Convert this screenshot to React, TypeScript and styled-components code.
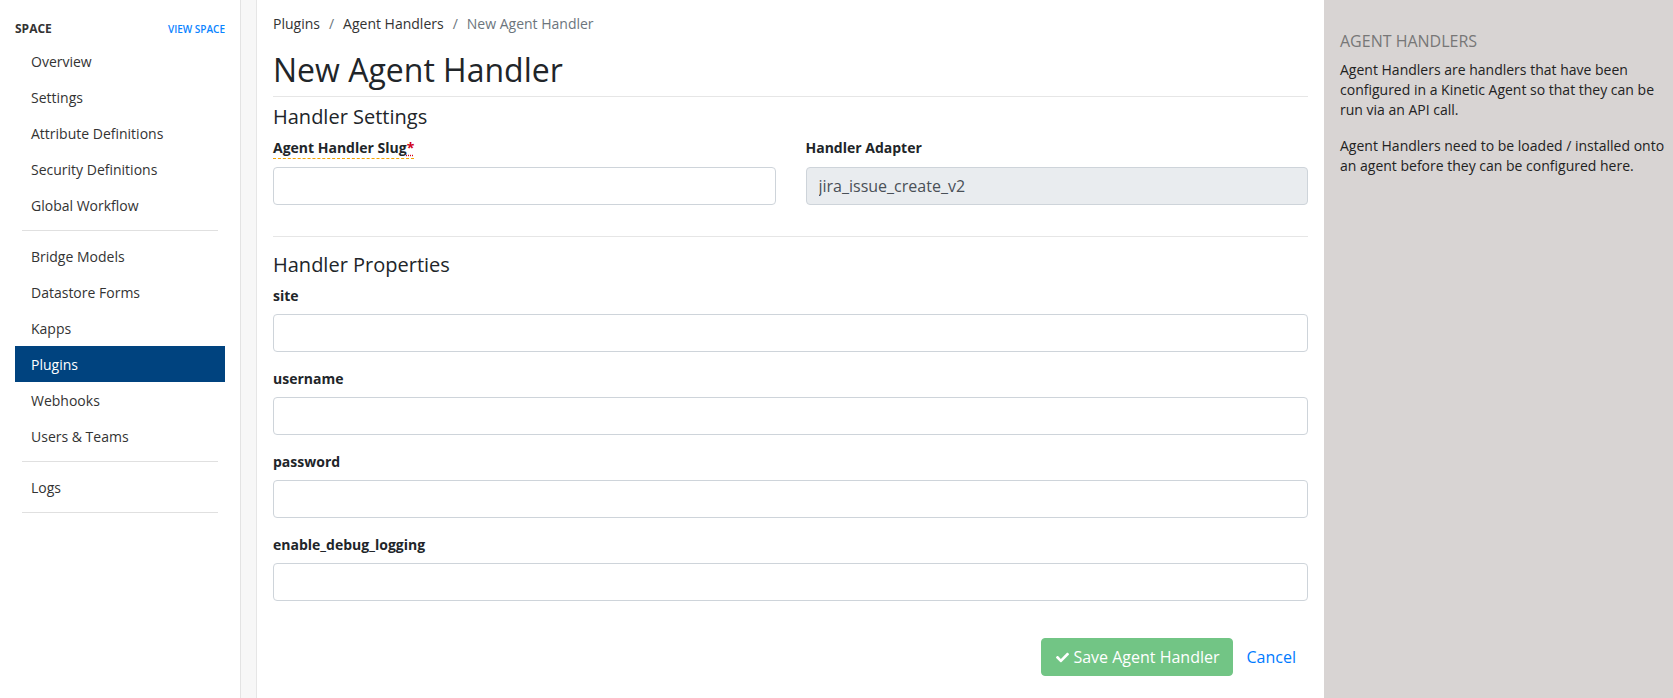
import React from 'react'
import styled, { createGlobalStyle } from 'styled-components'
import { FaCheck } from 'react-icons/fa'

const GlobalStyle = createGlobalStyle`
  html, body {
    margin: 0;
    padding: 0;
    height: 100%;
  }
  body {
    font-family: "Open Sans", "Noto Sans", sans-serif;
    font-size: 14px;
    color: #222;
    background: #fff;
  }
  * {
    box-sizing: border-box;
  }
`

const navGroups = [
  ['Overview', 'Settings', 'Attribute Definitions', 'Security Definitions', 'Global Workflow'],
  ['Bridge Models', 'Datastore Forms', 'Kapps', 'Plugins', 'Webhooks', 'Users & Teams'],
  ['Logs'],
]

const properties = ['site', 'username', 'password', 'enable_debug_logging']

const App: React.FC = () => {
  return (
    <>
      <GlobalStyle />
      <StyledLayout>
        <StyledSidebar>
          <StyledSidebarHeader>
            <StyledSidebarTitle>Space</StyledSidebarTitle>
            <StyledViewLink href="#">View Space</StyledViewLink>
          </StyledSidebarHeader>
          {navGroups.map((group, i) => (
            <React.Fragment key={i}>
              {group.map((item) => (
                <StyledNavItem key={item} active={item === 'Plugins'}>
                  {item}
                </StyledNavItem>
              ))}
              <StyledNavDivider />
            </React.Fragment>
          ))}
        </StyledSidebar>
        <StyledGutter />
        <StyledMain>
          <StyledBreadcrumb>
            <StyledCrumb>Plugins</StyledCrumb>
            <StyledCrumbSep>/</StyledCrumbSep>
            <StyledCrumb>Agent Handlers</StyledCrumb>
            <StyledCrumbSep>/</StyledCrumbSep>
            <StyledCrumb current>New Agent Handler</StyledCrumb>
          </StyledBreadcrumb>
          <StyledPageTitle>New Agent Handler</StyledPageTitle>

          <StyledSectionTitle first>Handler Settings</StyledSectionTitle>
          <StyledRow>
            <StyledFormGroup>
              <StyledLabel underline>
                Agent Handler Slug<StyledRequired title="required">*</StyledRequired>
              </StyledLabel>
              <StyledInput type="text" />
            </StyledFormGroup>
            <StyledFormGroup>
              <StyledLabel underline={false} spacer>
                Handler Adapter
              </StyledLabel>
              <StyledInput type="text" value="jira_issue_create_v2" disabled readOnly />
            </StyledFormGroup>
          </StyledRow>

          <StyledRule />

          <StyledSectionTitle>Handler Properties</StyledSectionTitle>
          {properties.map((name) => (
            <StyledFormGroup key={name}>
              <StyledLabel>{name}</StyledLabel>
              <StyledInput type="text" />
            </StyledFormGroup>
          ))}

          <StyledFormFooter>
            <StyledSaveButton disabled>
              <FaCheck size={13} />
              Save Agent Handler
            </StyledSaveButton>
            <StyledCancelButton>Cancel</StyledCancelButton>
          </StyledFormFooter>
        </StyledMain>
        <StyledAside>
          <StyledAsideTitle>Agent Handlers</StyledAsideTitle>
          <StyledAsideText>
            Agent Handlers are handlers that have been configured in a Kinetic Agent so that they
            can be run via an API call.
          </StyledAsideText>
          <StyledAsideText>
            Agent Handlers need to be loaded / installed onto an agent before they can be
            configured here.
          </StyledAsideText>
        </StyledAside>
      </StyledLayout>
    </>
  )
}

const StyledLayout = styled.div`
  display: flex;
  height: 100vh;
  width: 100%;
  overflow: hidden;
`

const StyledSidebar = styled.nav`
  width: 241px;
  flex-shrink: 0;
  padding: 20px 15px 0;
  border-right: 1px solid #e3e3e3;
  background: #fff;
`

const StyledSidebarHeader = styled.div`
  display: flex;
  align-items: baseline;
  justify-content: space-between;
  line-height: 18px;
  margin-bottom: 5px;
`

const StyledSidebarTitle = styled.span`
  font-size: 12px;
  font-weight: 700;
  color: #333;
  text-transform: uppercase;
`

const StyledViewLink = styled.a`
  font-size: 10px;
  font-weight: 600;
  color: #0a84ff;
  text-decoration: none;
  text-transform: uppercase;
`

const StyledNavItem = styled.div<{ active?: boolean }>`
  display: flex;
  align-items: center;
  height: 36px;
  padding-left: 16px;
  font-size: 14px;
  color: ${(props) => (props.active ? '#fff' : '#333')};
  background: ${(props) => (props.active ? '#00437f' : 'transparent')};
`

const StyledNavDivider = styled.hr`
  margin: 7px 7px;
  border: 0;
  border-top: 1px solid #e0e0e0;
`

const StyledGutter = styled.div`
  width: 16px;
  flex-shrink: 0;
  background: #f7f7f7;
  border-right: 1px solid #e6e6e6;
`

const StyledMain = styled.main`
  flex: 1;
  min-width: 0;
  padding: 13px 16px 0;
  background: #fff;
`

const StyledBreadcrumb = styled.div`
  display: flex;
  align-items: baseline;
  font-size: 14px;
  line-height: 21px;
`

const StyledCrumb = styled.span<{ current?: boolean }>`
  color: ${(props) => (props.current ? '#6c757d' : '#333')};
`

const StyledCrumbSep = styled.span`
  color: #6c757d;
  padding: 0 9px;
`

const StyledPageTitle = styled.h1`
  margin: 17px 0 0;
  padding-bottom: 7px;
  font-size: 32px;
  font-weight: 400;
  line-height: 1.2;
  color: #212529;
  border-bottom: 1px solid #e6e6e6;
`

const StyledSectionTitle = styled.h3<{ first?: boolean }>`
  margin: ${(props) => (props.first ? '8px' : '16px')} 0 8px;
  font-size: 20px;
  font-weight: 400;
  line-height: 24px;
  color: #212529;
`

const StyledRow = styled.div`
  display: grid;
  grid-template-columns: 1fr 1fr;
  column-gap: 30px;
`

const StyledFormGroup = styled.div`
  display: flex;
  flex-direction: column;
  align-items: flex-start;
  margin-bottom: 16px;
`

const StyledLabel = styled.label<{ underline?: boolean; spacer?: boolean }>`
  display: inline-block;
  margin-bottom: 8px;
  font-size: 14px;
  font-weight: 700;
  line-height: 21px;
  color: #212529;
  border-bottom: ${(props) =>
    props.underline ? '1px dashed #f5a300' : props.spacer ? '1px solid transparent' : '0'};
`

const StyledRequired = styled.abbr`
  color: #d0021b;
  text-decoration: underline dotted #d0021b;
  text-underline-offset: 1px;
  cursor: help;
`

const StyledInput = styled.input`
  width: 100%;
  height: 38px;
  padding: 6px 12px;
  font-family: "Open Sans", "Noto Sans", sans-serif;
  font-size: 16px;
  color: #495057;
  background: #fff;
  border: 1px solid #ced4da;
  border-radius: 4px;
  outline: none;

  &:disabled {
    background: #e9ecef;
    opacity: 1;
    -webkit-text-fill-color: #495057;
  }
`

const StyledRule = styled.hr`
  margin: 15px 0 0;
  border: 0;
  border-top: 1px solid #e6e6e6;
`

const StyledFormFooter = styled.div`
  display: flex;
  justify-content: flex-end;
  align-items: center;
  margin-top: 37px;
`

const StyledSaveButton = styled.button`
  display: inline-flex;
  align-items: center;
  gap: 4px;
  height: 38px;
  padding: 6px 12px 6px 14px;
  font-family: "Open Sans", "Noto Sans", sans-serif;
  font-size: 16px;
  color: #fff;
  background: #28a745;
  border: 1px solid #28a745;
  border-radius: 4px;
  opacity: 0.65;
`

const StyledCancelButton = styled.button`
  height: 38px;
  margin-left: 2px;
  padding: 6px 12px;
  font-family: "Open Sans", "Noto Sans", sans-serif;
  font-size: 16px;
  color: #007bff;
  background: transparent;
  border: 0;
`

const StyledAside = styled.aside`
  width: 349px;
  flex-shrink: 0;
  padding: 32px 8px 0 16px;
  background: #d8d4d3;
`

const StyledAsideTitle = styled.h4`
  margin: 0 0 9px;
  font-size: 16px;
  font-weight: 400;
  line-height: 1.2;
  color: #777;
  text-transform: uppercase;
`

const StyledAsideText = styled.p`
  margin: 0 0 16px;
  font-size: 14px;
  line-height: 20px;
  color: #222;
`

export default App
